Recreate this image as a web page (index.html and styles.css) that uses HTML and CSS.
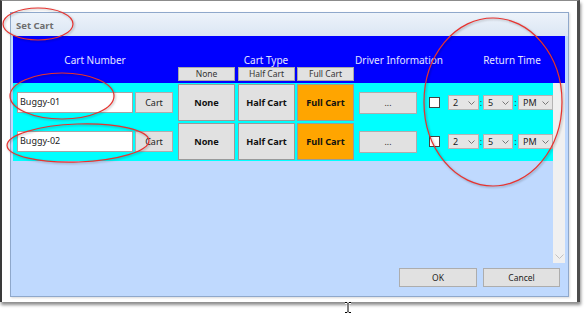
FILE: index.html
```html
<!DOCTYPE html>
<html>
<head>
    <meta charset="utf-8">
    <title>Set Cart</title>
    <link rel="stylesheet" href="styles.css">
</head>
<body>
    <div class="page">
        <div class="screen">
            <div class="dialog">
                <div class="title-bar">Set Cart</div>
                <div class="dialog-body">
                    <div class="grid-header">
                        <div class="header-labels">
                            <div class="lbl lbl-number">Cart Number</div>
                            <div class="lbl lbl-type">Cart Type</div>
                            <div class="lbl lbl-driver">Driver Information</div>
                            <div class="lbl lbl-return">Return Time</div>
                        </div>
                        <div class="header-types">
                            <div class="type-head th-none">None</div>
                            <div class="type-head th-half">Half Cart</div>
                            <div class="type-head th-full">Full Cart</div>
                        </div>
                    </div>

                    <div class="grid-area">
                        <div class="rows-wrap">
                            <div class="rows">
                                <div class="cart-row">
                                    <div class="cart-input">Buggy-01</div>
                                    <div class="btn cart-btn">Cart</div>
                                    <div class="type-btn tb-none">None</div>
                                    <div class="type-btn tb-half">Half Cart</div>
                                    <div class="type-btn tb-full selected">Full Cart</div>
                                    <div class="btn driver-btn">...</div>
                                    <div class="check"></div>
                                    <div class="combo combo-hour"><span>2</span><svg width="7" height="4" viewBox="0 0 7 4"><path d="M0.5 0.5 L3.5 3.5 L6.5 0.5" fill="none" stroke="#777" stroke-width="1"/></svg></div>
                                    <div class="colon">:</div>
                                    <div class="combo combo-min"><span>5</span><svg width="7" height="4" viewBox="0 0 7 4"><path d="M0.5 0.5 L3.5 3.5 L6.5 0.5" fill="none" stroke="#777" stroke-width="1"/></svg></div>
                                    <div class="colon colon-wide">:</div>
                                    <div class="combo combo-ampm"><span>PM</span><svg width="7" height="4" viewBox="0 0 7 4"><path d="M0.5 0.5 L3.5 3.5 L6.5 0.5" fill="none" stroke="#777" stroke-width="1"/></svg></div>
                                </div>
                                <div class="cart-row">
                                    <div class="cart-input">Buggy-02</div>
                                    <div class="btn cart-btn">Cart</div>
                                    <div class="type-btn tb-none">None</div>
                                    <div class="type-btn tb-half">Half Cart</div>
                                    <div class="type-btn tb-full selected">Full Cart</div>
                                    <div class="btn driver-btn">...</div>
                                    <div class="check"></div>
                                    <div class="combo combo-hour"><span>2</span><svg width="7" height="4" viewBox="0 0 7 4"><path d="M0.5 0.5 L3.5 3.5 L6.5 0.5" fill="none" stroke="#777" stroke-width="1"/></svg></div>
                                    <div class="colon">:</div>
                                    <div class="combo combo-min"><span>5</span><svg width="7" height="4" viewBox="0 0 7 4"><path d="M0.5 0.5 L3.5 3.5 L6.5 0.5" fill="none" stroke="#777" stroke-width="1"/></svg></div>
                                    <div class="colon colon-wide">:</div>
                                    <div class="combo combo-ampm"><span>PM</span><svg width="7" height="4" viewBox="0 0 7 4"><path d="M0.5 0.5 L3.5 3.5 L6.5 0.5" fill="none" stroke="#777" stroke-width="1"/></svg></div>
                                </div>
                            </div>
                        </div>
                        <div class="scrollbar">
                            <svg width="9" height="5" viewBox="0 0 9 5"><path d="M0.5 0.5 L4.5 4.5 L8.5 0.5" fill="none" stroke="#c2c2c2" stroke-width="1"/></svg>
                        </div>
                    </div>

                    <div class="footer">
                        <div class="btn footer-btn">OK</div>
                        <div class="btn footer-btn">Cancel</div>
                    </div>
                </div>
            </div>
        </div>

        <!-- red annotation rings drawn over the screenshot -->
        <svg class="marks" width="588" height="313" viewBox="0 0 588 313">
            <ellipse cx="38" cy="24" rx="35" ry="16" />
            <ellipse cx="62" cy="96" rx="52" ry="23" />
            <ellipse cx="78" cy="143" rx="71" ry="19" transform="rotate(-2 78 143)" />
            <ellipse cx="493" cy="102" rx="69" ry="84" />
        </svg>

        <svg class="cursor" width="8" height="13" viewBox="0 0 8 13">
            <path d="M1 1.5 H3 L4 2.5 L5 1.5 H7 M4 2.5 V10.5 M1 11.5 H3 L4 10.5 L5 11.5 H7" fill="none" stroke="#fff" stroke-width="3"/>
            <path d="M1 1.5 H3 L4 2.5 L5 1.5 H7 M4 2.5 V10.5 M1 11.5 H3 L4 10.5 L5 11.5 H7" fill="none" stroke="#000" stroke-width="1"/>
        </svg>
    </div>
</body>
</html>
```

FILE: styles.css
```css
body {
    margin: 0;
    padding: 0;
    background-color: #fff;
    font-family: "Noto Sans", "Open Sans", sans-serif;
    font-size: 11px;
    color: #000;
}
.page {
    position: relative;
    width: 588px;
    height: 313px;
    overflow: hidden;
}

/* window frame of the captured screen */
.screen {
    box-sizing: border-box;
    width: 580px;
    height: 302px;
    border-left: 2px solid #3a3a3a;
    border-top: 1px solid #8c8c8c;
    border-right: 3px solid #4c4c4c;
    box-shadow: 1px 3px 3px rgba(0, 0, 0, 0.45);
    padding: 11px 0 0 8px;
    background-color: #fff;
}
.dialog {
    box-sizing: border-box;
    width: 559px;
    height: 285px;
    border: 1px solid #8fa8cb;
    display: flex;
    flex-direction: column;
    box-shadow: 1px 1px 2px rgba(0, 0, 0, 0.15);
}
.title-bar {
    height: 23px;
    line-height: 25px;
    padding-left: 5px;
    font-size: 9.5px;
    font-weight: bold;
    color: #6e6e6e;
    background: linear-gradient(#edf3fa, #dbe6f4);
}
.dialog-body {
    flex: 1;
    display: flex;
    flex-direction: column;
    padding: 0 3px 2px 2px;
    background-color: #bfd9fe;
}

/* blue column header */
.grid-header {
    height: 47px;
    background-color: #0000ff;
    display: flex;
    flex-direction: column;
}
.header-labels {
    height: 31px;
    display: flex;
    align-items: flex-end;
}
.lbl {
    color: #e4e4ff;
    font-size: 10px;
    line-height: 14px;
    text-align: center;
    white-space: nowrap;
}
.lbl-number { margin-left: 4px; width: 156px; }
.lbl-type { margin-left: 5px; width: 176px; }
.lbl-driver { margin-left: 0px; width: 90px; }
.lbl-return { margin-left: 26px; width: 84px; }

.header-types {
    display: flex;
    height: 14px;
}
.type-head {
    box-sizing: border-box;
    width: 57px;
    height: 14px;
    line-height: 12px;
    font-size: 8.5px;
    text-align: center;
    color: #333;
    background-color: #e1e1e1;
    border: 1px solid #a8a8a8;
}
.th-none { margin-left: 165px; }
.th-half { margin-left: 3px; }
.th-full { margin-left: 2px; }

/* rows + scrollbar */
.grid-area {
    height: 180px;
    display: flex;
}
.rows-wrap {
    width: 540px;
    overflow: hidden;
}
.rows {
    background-color: #00ffff;
    padding: 1px 0;
    display: flex;
    flex-direction: column;
    gap: 2px;
}
.cart-row {
    height: 37px;
    display: flex;
    align-items: center;
    padding-left: 4px;
}
.cart-input {
    box-sizing: border-box;
    width: 116px;
    height: 21px;
    line-height: 17px;
    padding-left: 2px;
    font-size: 9px;
    background-color: #fff;
    border: 1px solid #a5a5a5;
    color: #222;
}
.btn {
    box-sizing: border-box;
    background-color: #e1e1e1;
    border: 1px solid #adadad;
    text-align: center;
    color: #222;
    font-size: 8.5px;
}
.cart-btn {
    margin-left: 2px;
    width: 38px;
    height: 21px;
    line-height: 19px;
    font-size: 9px;
}
.type-btn {
    box-sizing: border-box;
    width: 57px;
    height: 37px;
    line-height: 35px;
    text-align: center;
    font-size: 9.2px;
    font-weight: bold;
    color: #111;
    background-color: #e1e1e1;
    border: 1px solid #9a9a9a;
}
.type-btn.selected {
    background-color: #ffa500;
}
.tb-none { margin-left: 5px; }
.tb-half { margin-left: 3px; }
.tb-full { margin-left: 2px; }
.driver-btn {
    margin-left: 5px;
    width: 58px;
    height: 22px;
    line-height: 20px;
}
.check {
    box-sizing: border-box;
    margin-left: 12px;
    width: 11px;
    height: 11px;
    background-color: #fff;
    border: 1px solid #444;
}
.combo {
    box-sizing: border-box;
    height: 15px;
    display: flex;
    align-items: center;
    justify-content: space-between;
    padding: 0 3px 0 4px;
    background-color: #e5e5e5;
    border: 1px solid #b4b4b4;
    font-size: 9px;
    color: #222;
}
.combo-hour { margin-left: 8px; width: 31px; }
.combo-min { width: 30px; }
.combo-ampm { width: 35px; }
.colon {
    width: 4px;
    text-align: center;
    font-size: 9px;
    color: #333;
}
.colon-wide { width: 5px; }

.scrollbar {
    width: 12px;
    background-color: #f0f0f0;
    display: flex;
    flex-direction: column;
    justify-content: flex-end;
    align-items: center;
    padding-bottom: 4px;
    box-sizing: border-box;
}

/* OK / Cancel */
.footer {
    display: flex;
    justify-content: flex-end;
    gap: 6px;
    padding: 5px 5px 7px 0;
}
.footer-btn {
    width: 78px;
    height: 19px;
    line-height: 17px;
}
.footer-btn:last-child {
    width: 77px;
}

/* overlays */
.marks {
    position: absolute;
    left: 0;
    top: 0;
    pointer-events: none;
    filter: drop-shadow(1px 1px 1px rgba(0, 0, 0, 0.3));
}
.marks ellipse {
    fill: none;
    stroke: #e8322e;
    stroke-width: 1.2;
}
.cursor {
    position: absolute;
    left: 344px;
    top: 301px;
}
```
